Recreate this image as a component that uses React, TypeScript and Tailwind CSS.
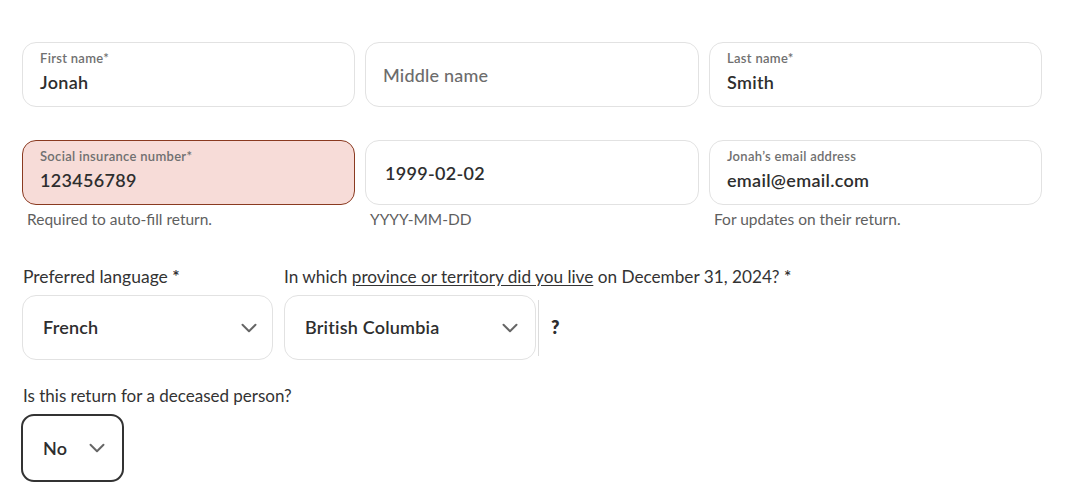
import { ChevronDown } from "lucide-react";

type FieldProps = {
  label?: string;
  value?: string;
  placeholder?: string;
  helper?: string;
  error?: boolean;
};

function TextField({ label, value, placeholder, helper, error }: FieldProps) {
  return (
    <div className="flex flex-col">
      <div
        className={
          error
            ? "h-[65px] rounded-[14px] border border-[#8a3a20] bg-[#f7dcd8] px-[17px] flex flex-col justify-center"
            : "h-[65px] rounded-[14px] border border-[#e2e2e2] bg-white px-[17px] flex flex-col justify-center"
        }
      >
        {label && (
          <span className="text-[13px] font-semibold text-[#707070] leading-[15px] tracking-[0.3px] -mt-[4px]">
            {label}
          </span>
        )}
        {value ? (
          <span
            className={
              label
                ? "text-[18px] font-semibold text-[#2e2e2e] leading-[24px] mt-[4px] tracking-[0.3px]"
                : "text-[18px] font-semibold text-[#2e2e2e] leading-[24px] pl-[2px] tracking-[0.3px]"
            }
          >
            {value}
          </span>
        ) : (
          <span className="text-[18px] font-medium text-[#6c6c6c] leading-[24px] tracking-[0.2px]">{placeholder}</span>
        )}
      </div>
      {helper && (
        <span className="mt-[4px] pl-[5px] text-[15.5px] text-[#5f5f5f] leading-[20px]">{helper}</span>
      )}
    </div>
  );
}

function Select({ value, className }: { value: string; className: string }) {
  return (
    <div className={className}>
      <span className="text-[18px] font-semibold text-[#2e2e2e] tracking-[0.2px]">{value}</span>
      <ChevronDown className="w-[26px] h-[26px] text-[#666]" strokeWidth={1.8} />
    </div>
  );
}

export default function App() {
  return (
    <div
      className="w-[1067px] h-[503px] bg-white pt-[42px] pl-[22px]"
      style={{ fontFamily: "Lato, 'Open Sans', sans-serif" }}
    >
      {/* name row */}
      <div className="grid grid-cols-[333px_334px_333px] gap-x-[10px]">
        <TextField label="First name*" value="Jonah" />
        <TextField placeholder="Middle name" />
        <TextField label="Last name*" value="Smith" />
      </div>

      {/* sin / dob / email */}
      <div className="grid grid-cols-[333px_334px_333px] gap-x-[10px] mt-[33px]">
        <TextField label="Social insurance number*" value="123456789" helper="Required to auto-fill return." error />
        <TextField value="1999-02-02" helper="YYYY-MM-DD" />
        <TextField label="Jonah’s email address" value="email@email.com" helper="For updates on their return." />
      </div>

      {/* language / province */}
      <div className="flex gap-x-[11px] mt-[37px]">
        <div className="flex flex-col w-[251px]">
          <span className="text-[17.5px] text-[#333] leading-[22px] whitespace-nowrap pl-[1px]">
            Preferred language <span className="font-semibold">*</span>
          </span>
          <Select
            value="French"
            className="mt-[7px] h-[65px] rounded-[14px] border border-[#e2e2e2] pl-[20px] pr-[10px] flex items-center justify-between"
          />
        </div>
        <div className="flex flex-col">
          <span className="text-[17.2px] text-[#333] leading-[22px] whitespace-nowrap">
            In which <span className="underline underline-offset-2">province or territory did you live</span> on December 31, 2024?{" "}
            <span className="font-semibold">*</span>
          </span>
          <div className="mt-[7px] flex items-center">
            <Select
              value="British Columbia"
              className="w-[252px] h-[65px] rounded-[14px] border border-[#e2e2e2] pl-[20px] pr-[12px] flex items-center justify-between"
            />
            <div className="ml-[2px] w-px h-[56px] bg-[#dcdcdc]" />
            <span className="ml-[12px] text-[18px] font-extrabold text-[#2e2e2e]">?</span>
          </div>
        </div>
      </div>

      {/* deceased */}
      <div className="flex flex-col mt-[25px]">
        <span className="text-[17px] text-[#333] leading-[22px] pl-[1px]">Is this return for a deceased person?</span>
        <Select
          value="No"
          className="mt-[7px] -ml-px w-[103px] h-[68px] rounded-[13px] border-2 border-[#333] pl-[20px] pr-[12px] flex items-center justify-between"
        />
      </div>
    </div>
  );
}
